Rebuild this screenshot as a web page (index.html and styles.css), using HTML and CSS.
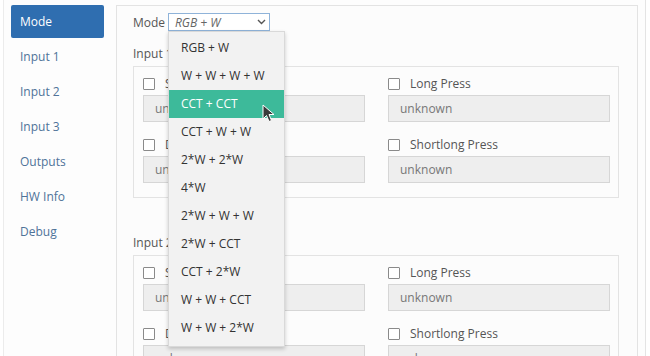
FILE: index.html
```html
<!DOCTYPE html>
<html lang="en">
<head>
  <meta charset="UTF-8">
  <meta name="viewport" content="width=device-width, initial-scale=1.0">
  <title>Dimmer Settings</title>
  <link rel="stylesheet" href="styles.css">
</head>
<body>
  <div class="page">
    <div class="sidebar">
      <a href="#" class="nav-item active">Mode</a>
      <a href="#" class="nav-item">Input 1</a>
      <a href="#" class="nav-item">Input 2</a>
      <a href="#" class="nav-item">Input 3</a>
      <a href="#" class="nav-item">Outputs</a>
      <a href="#" class="nav-item">HW Info</a>
      <a href="#" class="nav-item">Debug</a>
    </div>

    <div class="panel">
      <div class="mode-row">
        <span class="mode-label">Mode</span>
        <div class="select-wrap">
          <div class="select">
            <span>RGB + W</span>
            <svg class="chevron" width="9" height="6" viewBox="0 0 9 6"><path d="M1 1 L4.5 4.5 L8 1" fill="none" stroke="#555" stroke-width="1.4"/></svg>
          </div>
          <ul class="dropdown">
            <li>RGB + W</li>
            <li>W + W + W + W</li>
            <li class="selected">CCT + CCT</li>
            <li>CCT + W + W</li>
            <li>2*W + 2*W</li>
            <li>4*W</li>
            <li>2*W + W + W</li>
            <li>2*W + CCT</li>
            <li>CCT + 2*W</li>
            <li>W + W + CCT</li>
            <li>W + W + 2*W</li>
          </ul>
          <svg class="cursor" width="14" height="20" viewBox="0 0 14 20"><path d="M1 1 L1 15 L4.5 11.5 L7 17.5 L9.5 16.5 L7 10.5 L12 10.5 Z" fill="#3a3a3a" stroke="#fff" stroke-width="1"/></svg>
        </div>
      </div>

      <div class="group-title">Input 1</div>
      <div class="group">
        <div class="field">
          <label><span class="check"></span>Short Press</label>
          <div class="value">unknown</div>
        </div>
        <div class="field">
          <label><span class="check"></span>Long Press</label>
          <div class="value">unknown</div>
        </div>
        <div class="field">
          <label><span class="check"></span>Double Press</label>
          <div class="value">unknown</div>
        </div>
        <div class="field">
          <label><span class="check"></span>Shortlong Press</label>
          <div class="value">unknown</div>
        </div>
      </div>

      <div class="group-title second">Input 2</div>
      <div class="group">
        <div class="field">
          <label><span class="check"></span>Short Press</label>
          <div class="value">unknown</div>
        </div>
        <div class="field">
          <label><span class="check"></span>Long Press</label>
          <div class="value">unknown</div>
        </div>
        <div class="field">
          <label><span class="check"></span>Double Press</label>
          <div class="value">unknown</div>
        </div>
        <div class="field">
          <label><span class="check"></span>Shortlong Press</label>
          <div class="value">unknown</div>
        </div>
      </div>
    </div>
  </div>
</body>
</html>
```

FILE: styles.css
```css
body {
  font-family: "Open Sans", Arial, sans-serif;
  font-size: 12px;
  color: #555;
  margin: 0;
  padding: 0;
  background-color: #fff;
  overflow: hidden;
}
.page {
  display: flex;
  align-items: flex-start;
  margin-left: 3px;
  width: 643px;
  height: 356px;
  padding: 5px 7px 0 7px;
  box-sizing: border-box;
  border-left: 1px solid #ececec;
  border-right: 1px solid #e4e4e4;
  background-color: #fdfdfd;
}
.sidebar {
  width: 93px;
  flex-shrink: 0;
  display: flex;
  flex-direction: column;
  gap: 2px;
  margin-right: 12px;
}
.nav-item {
  display: block;
  height: 33px;
  line-height: 33px;
  padding-left: 9px;
  color: #4f7399;
  text-decoration: none;
  border-radius: 2px;
}
.nav-item.active {
  background-color: #2f6eb0;
  color: #fff;
}
.panel {
  flex: 1;
  height: 400px;
  border: 1px solid #e3e3e3;
  background-color: #fcfcfc;
  padding: 7px 18px 0 16px;
}
.mode-row {
  display: flex;
  align-items: center;
  height: 18px;
}
.mode-label {
  width: 35px;
}
.select-wrap {
  position: relative;
}
.select {
  height: 16px;
  border: 1px solid #8fb3d9;
  background-color: #fff;
  display: flex;
  align-items: center;
  justify-content: space-between;
  padding: 0 3px 0 6px;
  box-sizing: content-box;
  width: 91px;
  font-style: italic;
  color: #666;
}
.dropdown {
  position: absolute;
  top: 18px;
  left: 0;
  width: 115px;
  margin: 0;
  padding: 2px 0 4px 0;
  list-style: none;
  background-color: #f2f2f2;
  border: 1px solid #d9d9d9;
  box-shadow: 0 2px 4px rgba(0, 0, 0, 0.2);
  color: #333;
  z-index: 5;
}
.dropdown li {
  height: 28px;
  line-height: 28px;
  padding-left: 12px;
}
.dropdown li.selected {
  background-color: #3dba9a;
  color: #fff;
}
.cursor {
  position: absolute;
  left: 94px;
  top: 91px;
  z-index: 6;
}
.group-title {
  margin-top: 15px;
  line-height: 16px;
}
.group-title.second {
  margin-top: 37px;
}
.group {
  margin-top: 4px;
  border: 1px solid #e3e3e3;
  background-color: #fcfcfc;
  display: grid;
  grid-template-columns: 1fr 1fr;
  column-gap: 23px;
  row-gap: 14px;
  padding: 8px 8px 14px 9px;
}
.field label {
  display: flex;
  align-items: center;
  height: 17px;
  color: #555;
}
.check {
  width: 10px;
  height: 10px;
  border: 1px solid #8a8a8a;
  border-radius: 1px;
  background-color: #fff;
  margin-right: 10px;
}
.value {
  margin-top: 3px;
  height: 25px;
  line-height: 25px;
  border: 1px solid #d6d6d6;
  background-color: #eee;
  padding-left: 11px;
  color: #777;
}
```
